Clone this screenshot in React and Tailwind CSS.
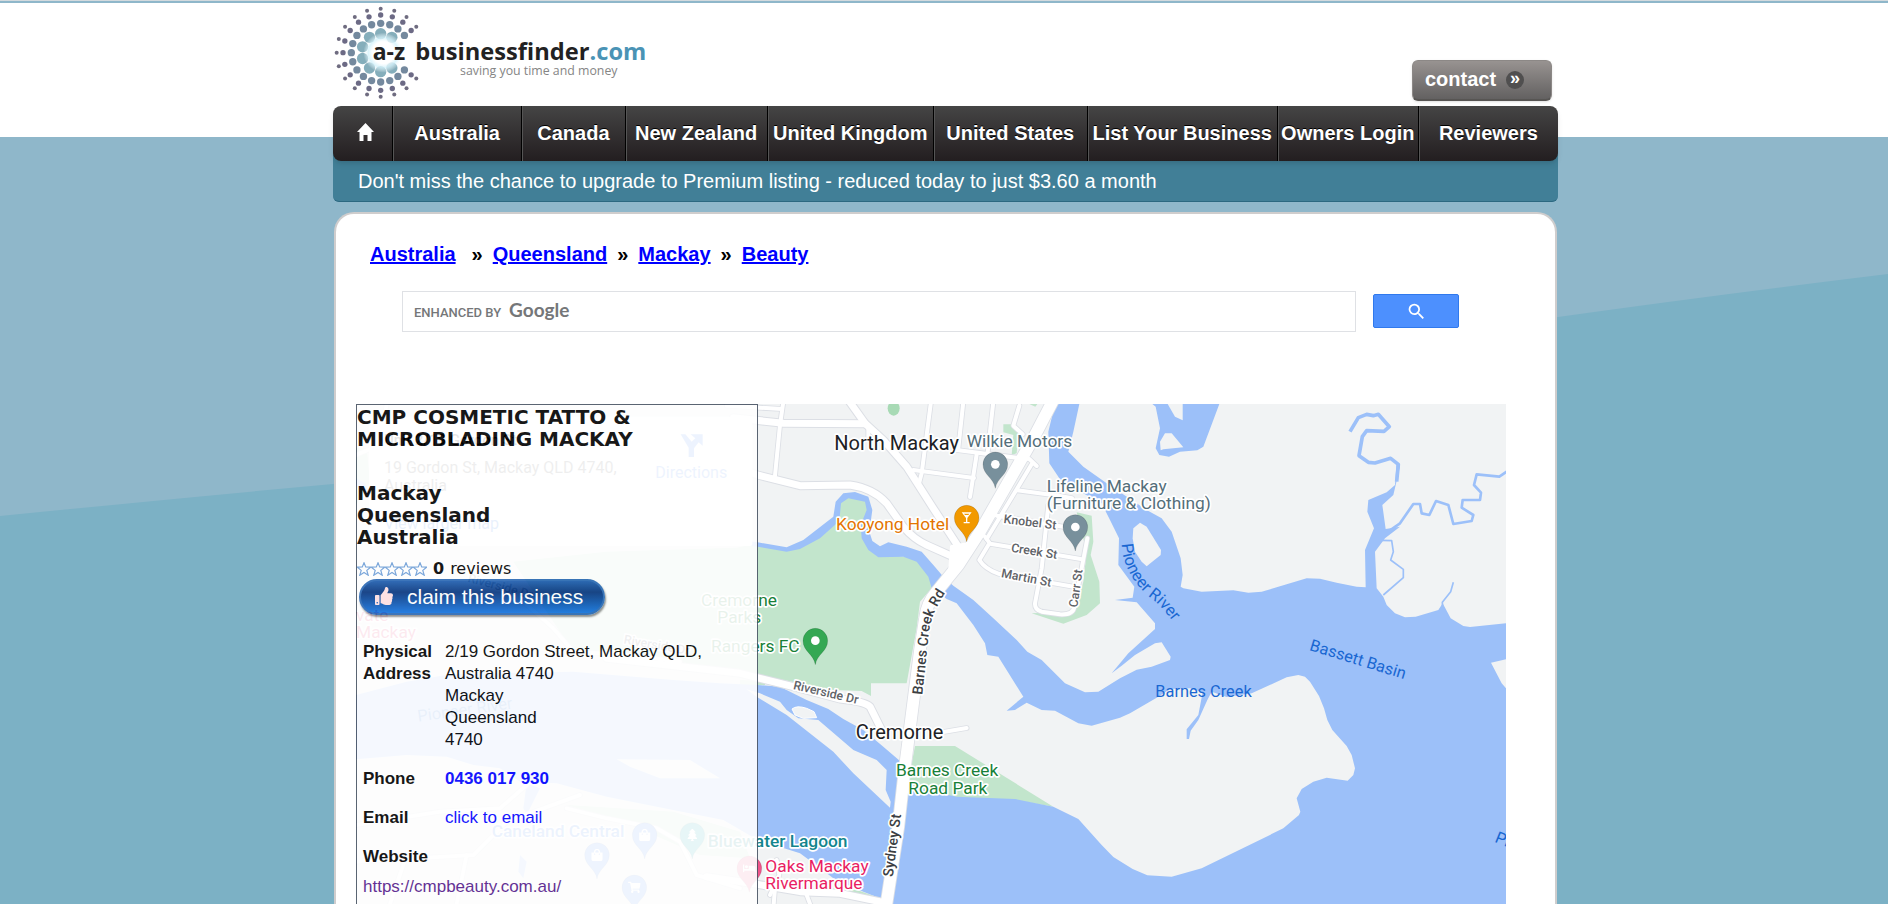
import { MdSearch } from "react-icons/md";
import { FaThumbsUp, FaBed, FaShoppingCart, FaShoppingBag, FaTree } from "react-icons/fa";

const navItems = [
  { label: "Australia", size: "flex-[129]" },
  { label: "Canada", size: "flex-[103]" },
  { label: "New Zealand", size: "flex-[142]" },
  { label: "United Kingdom", size: "flex-[166]" },
  { label: "United States", size: "flex-[154]" },
  { label: "List Your Business", size: "flex-[190]" },
  { label: "Owners Login", size: "flex-[141]" },
  { label: "Reviewers", size: "flex-[140]" },
];

const crumbs = ["Australia", "Queensland", "Mackay", "Beauty"];

// rings of the sunburst: radius, dot size, degrees between dots, colour
const rings = [
  { radius: 57, dot: 17, step: 36, fill: "#85aebb" },
  { radius: 88, dot: 11, step: 18, fill: "#74899e" },
  { radius: 113, dot: 8, step: 18, fill: "#6c6a85" },
  { radius: 132, dot: 6, step: 18, fill: "#6f6c80" },
];

function Logo() {
  const dots = [];
  rings.forEach((ring) => {
    for (let deg = 0; deg < 360; deg += ring.step) {
      if (deg > 60 && deg < 120) continue;
      const rad = (deg * Math.PI) / 180;
      dots.push(
        <circle
          key={`${ring.radius}-${deg}`}
          cx={182 + ring.radius * Math.sin(rad)}
          cy={158 - ring.radius * Math.cos(rad)}
          r={ring.dot}
          fill={ring.fill}
        />
      );
    }
  });
  return (
    <a href="#home" aria-label="a-z businessfinder.com" className="block">
      <svg viewBox="39 9 960 297" className="h-[99px] w-[320px]" fontFamily="'Open Sans', sans-serif">
        <defs>
          <radialGradient id="glow">
            <stop offset="0" stopColor="#ffffff" />
            <stop offset="0.55" stopColor="#ffffff" />
            <stop offset="0.75" stopColor="#d3f2fb" />
            <stop offset="1" stopColor="#ffffff" stopOpacity="0" />
          </radialGradient>
        </defs>
        {dots}
        <circle cx="190" cy="158" r="60" fill="url(#glow)" opacity="0.8" />
        <text x="158" y="179" fontSize="69" fontWeight="700" fill="#222222">a-z</text>
        <text x="286" y="179" fontSize="71" fontWeight="700" fill="#222222">
          businessfinder<tspan fill="#4a93b5">.com</tspan>
        </text>
        <text x="420" y="224" fontSize="37" fill="#858585">saving you time and money</text>
      </svg>
    </a>
  );
}

function Cocktail() {
  return (
    <path
      d="M-15 -16H15L2 1V13H9V17H-9V13H-2V1zM-8 -12L-5 -8H5L8 -12z"
      fill="#ffffff"
      fillRule="evenodd"
    />
  );
}

function Pin({ x, y, fill, icon: Icon, children }) {
  return (
    <g transform={`translate(${x} ${y})`}>
      <path
        d="M0 72C-5 40-37 32-37 0a37 37 0 0 1 74 0C37 32 5 40 0 72z"
        fill={fill}
        stroke="#00000030"
        strokeWidth="2"
      />
      {Icon && <Icon x="-19" y="-19" size={38} color="#ffffff" />}
      {children}
      {!Icon && !children && <circle r="13" fill="#ffffff" />}
    </g>
  );
}

const minorRoads = [
  "M-40 32L125 42",
  "M130 20L120 90L105 242",
  "M573 20L545 235L538 262",
  "M520 225L702 249",
  "M710 178L690 306",
  "M670 20L655 160",
  "M760 20L743 172",
  "M650 165L830 188L868 192L890 213",
  "M838 32L820 92L848 118",
  "M875 208L740 432",
  "M832 286L960 303L996 310",
  "M925 330L905 520L885 625Q884 645 905 650L960 658Q1000 660 1003 635L1042 430",
  "M770 362L1010 402",
  "M735 425L750 446L1022 492",
  "M745 450L718 495Q735 522 775 536L1005 576",
  "M385 90L385 125",
  "M610 1011L680 999",
  "M200 1500L215 1540M105 1480L100 1540",
  "M110 1395L118 1440L90 1500",
  "M-1152 1290L-900 1250L-720 1240L-640 1170",
  "M-1152 1400L-800 1380L-700 1280L-480 1200",
  "M-520 1240L-400 1270L-250 1300L-180 1340L-130 1440L0 1480",
  "M-1050 1527L-1000 1380M-850 1527L-820 1380",
  "M-650 620L-560 700L-500 770L-340 780L-180 800",
  "M-1152 180L-1080 150L-1060 27",
];

const majorRoads = [
  "M-20 68L130 85L375 86",
  "M325 15L375 85L430 135L500 215L580 340L655 455",
  "M-60 200L53 240L180 272L330 270Q400 280 440 325L490 395Q520 432 560 450L650 490",
  "M-400 790L0 835L160 875L300 912Q375 920 390 935L425 1005",
  "M-100 1445L53 1468L180 1490L300 1495L430 1522",
];

const mainRoad = "M940 15L880 130L800 270L720 410L655 510L590 590Q560 625 555 670L540 765L518 935L495 1115L475 1295L438 1535";

function MapView() {
  return (
    <svg
      role="img"
      aria-label="Map of Mackay"
      viewBox="-1152 27 3450 1500"
      preserveAspectRatio="xMinYMin slice"
      className="absolute inset-0 h-full w-full"
      fontFamily="Roboto, sans-serif"
    >
      <defs>
        <path id="pioneer" d="M1145 447C1148 530 1205 590 1240 615C1275 645 1300 680 1350 745" />
        <path id="barnes-rd" d="M547 900L562 760C568 680 575 655 625 580L660 530" />
        <path id="sydney-st" d="M458 1447L478 1300L491 1200" />
      </defs>
      <rect x="-1152" y="27" width="3450" height="1500" fill="#f1f3f4" />

      <g fill="#c2e5cc">
        <path d="M-680 500L-400 470L-10 458L53 445L140 460L190 440L285 375L300 315L325 300L375 310L385 345L380 440L450 480L530 490L580 560L575 580L540 620L530 700L500 865L393 865L393 903L365 888L280 885L53 840L-300 790L-500 770L-600 620z" />
        <path d="M0 855L75 858L75 870L0 870z" />
        <path d="M1010 352L1055 362L1060 440L1052 480L1078 560L1080 625L1040 660L970 686L875 655L1005 650L1030 560L1040 470z" />
        <path d="M790 88L815 88L835 115L830 175L815 180L820 120L790 112z" />
        <path d="M868 27L892 27L886 35z" />
        <path d="M525 1053L645 1053L940 1235L825 1215L650 1210L500 1180z" />
        <path d="M-1152 160L-1120 160L-1110 260L-1152 330z" />
        <path d="M-520 1230L-200 1250L0 1310L30 1390L-120 1380L-350 1280z" />
        <path d="M310 1478L360 1488L420 1510L420 1525L360 1505z" />
        <ellipse cx="461" cy="40" rx="18" ry="22" fill="#a8dab5" />
      </g>

      <g fill="#9cc0f9">
        <path
          d="M945 27L925 110L928 205L965 260L1085 325L1110 375L1137 430L1135 510L1183 575L1178 608L1125 615L1190 622L1245 685L1245 702L1165 775L1115 835L1145 812L1185 780L1245 745L1265 742L1292 785L1290 795L1235 815L1190 824L1140 850L1075 890L1035 892L975 865L905 795L862 770L830 735L760 670L700 615L640 572L610 545L580 510L545 470L500 455L445 442L420 454L397 438L388 410L397 345L385 305L345 291L310 295L287 320L280 365L190 435L140 457L53 442L-300 400L-300 415
          L53 455L140 470L180 462L240 430L298 378L303 325L325 310L375 320L380 345L362 390L365 430L385 465L415 487L490 485L530 500L565 545L575 580L620 612L650 625L700 690L735 745L742 780L775 785L850 905L800 947L825 945L860 923L905 945L945 947L1015 985L1055 992L1140 968L1170 955L1250 908L1290 882L1350 880L1388 892L1375 960L1340 1003L1340 1032L1347 1032L1352 1007L1375 975L1402 915L1415 890L1460 906L1535 895L1640 847L1675 840L1695 845L1710 860L1737 903L1752 940L1762 975L1777 1005L1820 1053L1835 1080L1845 1120L1840 1140L1823 1157L1760 1148L1720 1160L1685 1182L1670 1210L1681 1250L1677 1260L1630 1300L1385 1420L1295 1445L1222 1441L1178 1422L1120 1386L1085 1350L1015 1272L940 1235L825 1212L650 1205L520 1178
          L480 1098L430 1055L370 1005L310 972L265 942L200 915L120 875L53 870L-60 865L-200 855L-500 830L-870 838L-1000 860L-1152 900L-1152 1093L-1000 1080L-880 1085L-800 1110L-720 1120L-660 1160L-550 1165L-400 1205L-250 1235L-50 1275L53 1335L180 1375L235 1415L280 1450L370 1490L420 1510L420 1530L2300 1530L2300 1420
          L2298 880L2285 865L2253 803L2298 793L2298 685L2190 696L2170 693L2132 670L2108 625L2095 645L2027 665L1995 667L1965 655L1940 630L1930 605L1910 580L1905 470L1935 430L1980 395L1937 402L1927 330L1960 300L1980 215L1970 200L1965 270L1940 292L1885 315L1882 350L1902 400L1875 465L1877 577L1850 575L1790 563L1740 551L1700 550L1640 568L1565 590L1525 593L1480 586L1385 590L1330 580L1322 575L1328 540L1322 490L1295 410L1265 370L1220 345L1100 265L1030 215L985 170L1000 110L1018 27z"
        />
        <path d="M1237 27L1247 35L1260 100L1247 160L1258 180L1287 185L1320 170L1372 166L1390 155L1438 27z" />
        <path d="M-640 1165L-600 1180L-640 1260L-650 1240zM-660 1380L-640 1400L-650 1450L-665 1430z" />
        <path d="M-1152 250L-1125 265L-1110 300L-1152 275z" />
      </g>

      <g fill="none" stroke="#9cc0f9" strokeLinejoin="round">
        <path d="M1830 110L1855 68L1880 58L1900 62L1915 58L1948 95L1932 109L1880 107L1867 125L1857 182L1885 202L1905 204L1952 190L1975 208L1970 260" strokeWidth="11" />
        <path d="M1937 415L1980 385L2020 327L2040 327L2045 355L2068 360L2088 318L2125 330L2140 387L2195 378L2200 360L2165 338L2168 315L2220 315L2223 293L2202 270L2210 238L2278 245L2300 230" strokeWidth="8" />
        <path d="M1925 436L1955 437L1960 470L1952 495L1990 523L1990 548L1930 600" strokeWidth="5" />
        <path d="M2108 640L2107 622L2132 590L2140 562" strokeWidth="5" />
      </g>

      <g fill="#f1f3f4">
        <path d="M1283 27L1305 65L1328 76L1328 27z" />
        <path d="M1262 166L1260 140L1275 115L1295 115L1330 157L1270 163z" />
        <path d="M1178 430L1180 400L1200 383L1220 395L1263 465L1262 480L1220 514L1205 500L1185 470z" />
        <path d="M20 883L60 895L120 920L140 945L175 970L235 975L270 1005L340 1065L410 1095L440 1125L437 1185L452 1220L450 1238L340 1135L280 1070L140 960L50 905z" />
        <path d="M-370 1093L-150 1095L-60 1150L-240 1150L-330 1115z" />
      </g>
      <path d="M156 942Q170 930 200 940L222 950L230 968L190 970L165 960z" fill="#f1f3f4" stroke="#ffffff" strokeWidth="3" />

      <g fill="none" strokeLinecap="round" strokeLinejoin="round">
        <g stroke="#dcdfe5">
          {minorRoads.map((d) => <path key={d} d={d} strokeWidth="17" />)}
          {majorRoads.map((d) => <path key={d} d={d} strokeWidth="27" />)}
          <path d={mainRoad} strokeWidth="40" />
        </g>
        <g stroke="#ffffff">
          {minorRoads.map((d) => <path key={d} d={d} strokeWidth="12" />)}
          {majorRoads.map((d) => <path key={d} d={d} strokeWidth="21" />)}
          <path d={mainRoad} strokeWidth="35" />
          <path d="M635 455L690 445L650 530L630 520z" fill="#ffffff" strokeWidth="10" />
        </g>
      </g>

      <g fontSize="52" stroke="#ffffff" strokeWidth="10" strokeLinejoin="round" paintOrder="stroke">
        <g fontSize="60" fill="#202124">
          <text x="283" y="165">North Mackay</text>
          <text x="347" y="1032">Cremorne</text>
        </g>
        <g fill="#546e7a">
          <text x="680" y="155">Wilkie Motors</text>
          <text x="920" y="290">Lifeline Mackay</text>
          <text x="920" y="343">(Furniture &amp; Clothing)</text>
        </g>
        <text x="288" y="406" fill="#e37400">Kooyong Hotel</text>
        <g fill="#188038">
          <text x="-117" y="632">Cremorne</text>
          <text x="-68" y="685">Parks</text>
          <text x="-87" y="771">Rangers FC</text>
          <text x="468" y="1143">Barnes Creek</text>
          <text x="505" y="1196">Road Park</text>
        </g>
        <text x="-97" y="1357" fontWeight="500" fill="#12858d">Bluewater Lagoon</text>
        <text x="-745" y="1327" fontWeight="500" fill="#4285f4">Caneland Central</text>
        <g fill="#e91e63">
          <text x="76" y="1430">Oaks Mackay</text>
          <text x="76" y="1483">Rivermarque</text>
          <text x="-1152" y="677">vate</text>
          <text x="-1152" y="730">Mackay</text>
        </g>
        <g fontSize="37" fontWeight="500" fill="#5f6368">
          <text transform="translate(790 384) rotate(7)">Knobel St</text>
          <text transform="translate(812 470) rotate(9)">Creek St</text>
          <text transform="translate(782 546) rotate(11)">Martin St</text>
          <text transform="translate(1012 638) rotate(-82)">Carr St</text>
          <text transform="translate(158 882) rotate(13)">Riverside Dr</text>
          <text transform="translate(-350 745) rotate(10)">Riverside Dr</text>
          <text transform="translate(-818 560) rotate(15)">Riverside Dr</text>
        </g>
        <g fontSize="43" fontWeight="500" fill="#3c4043">
          <text><textPath href="#barnes-rd">Barnes Creek Rd</textPath></text>
          <text><textPath href="#sydney-st">Sydney St</textPath></text>
        </g>
      </g>

      <g fontSize="49" fill="#1967d2">
        <text><textPath href="#pioneer">Pioneer River</textPath></text>
        <text transform="translate(1706 765) rotate(17)">Bassett Basin</text>
        <text x="1246" y="906">Barnes Creek</text>
        <text transform="translate(2262 1340) rotate(22)">Pioneer River</text>
        <text transform="translate(-965 980) rotate(-8)">Pioneer River</text>
      </g>

      <Pin x={766} y={208} fill="#78909c" />
      <Pin x={1006} y={396} fill="#78909c" />
      <Pin x={680} y={368} fill="#f29900">
        <Cocktail />
      </Pin>
      <Pin x={226} y={737} fill="#34a853" />
      <Pin x={-143} y={1320} fill="#12a4af" icon={FaTree} />
      <Pin x={-286} y={1320} fill="#5491f5" icon={FaShoppingBag} />
      <Pin x={-429} y={1380} fill="#5491f5" icon={FaShoppingBag} />
      <Pin x={-317} y={1477} fill="#5491f5" icon={FaShoppingCart} />
      <Pin x={28} y={1420} fill="#f0548a" icon={FaBed} />

      {/* place box of the map */}
      <rect x="-1113" y="65" width="1150" height="388" rx="6" fill="#ffffff" />
      <g fontSize="48">
        <text x="-1068" y="150" fontWeight="500" fontSize="45" fill="#000000">Unit 2/19 Gordon St</text>
        <text x="-1068" y="234" fill="#5b5b5b">19 Gordon St, Mackay QLD 4740,</text>
        <text x="-1068" y="288" fill="#5b5b5b">Australia</text>
        <text x="-1068" y="402" fill="#1a73e8">View larger map</text>
        <text x="-254" y="249" fill="#4d8bf5">Directions</text>
      </g>
      <path d="M-178 118L-164 118L-145 140L-134 130L-148 118L-112 118L-112 152L-124 142L-138 160L-138 186L-154 186L-154 158z" fill="#4d8bf5" />
    </svg>
  );
}

function Star() {
  return (
    <svg viewBox="0 0 14 14" className="size-[14px]" fill="#ffffff" stroke="#6f9fd8" strokeWidth="1.2">
      <path d="M7 0.800L8.700 5L13.600 5.200L9.800 8.400L11.200 13.200L7 10.500L2.800 13.200L4.200 8.400L.4 5.200L5.300 5z" />
    </svg>
  );
}

function BusinessCard() {
  return (
    <div className="relative w-[402px] border border-b-0 border-gray-600 bg-white pt-px text-black opacity-90">
      <h1 className="font-['DejaVu_Sans',sans-serif] text-xl font-bold leading-[22px]">
        CMP COSMETIC TATTO &amp;
        <br />
        MICROBLADING MACKAY
      </h1>
      <h2 className="mt-8 font-['DejaVu_Sans',sans-serif] text-xl font-bold leading-[22px]">
        Mackay
        <br />
        Queensland
        <br />
        Australia
      </h2>
      <div className="mt-2.5 flex h-[21px] items-center font-['DejaVu_Sans',sans-serif] text-base">
        <span className="flex" role="img" aria-label="0 stars">
          {[1, 2, 3, 4, 5].map((n) => <Star key={n} />)}
        </span>
        <b className="ml-1.5">0</b>
        <span className="ml-1.5">reviews</span>
      </div>
      <button
        type="button"
        className="ml-0.5 flex h-9 w-[246px] items-center gap-3.5 rounded-full border-2 border-[#2a68b4] bg-linear-to-b from-[#1c5cae] via-[#06347d] via-35% to-[#1273e0] pb-0.5 pl-3.5 text-[21px] leading-none text-white shadow-[1px_2px_2px_#888888]"
      >
        <FaThumbsUp className="size-[18px] text-[#ffe0e2]" />
        claim this business
      </button>
      <table className="ml-1.5 mt-[26px] text-left text-[17px] leading-[22px]">
        <tbody className="align-top">
          <tr>
            <th scope="row" className="w-[82px] pb-[17px]">Physical Address</th>
            <td className="pb-[17px]">
              2/19 Gordon Street, Mackay QLD,
              <br />
              Australia 4740
              <br />
              Mackay
              <br />
              Queensland
              <br />
              4740
            </td>
          </tr>
          <tr>
            <th scope="row" className="pb-[17px]">Phone</th>
            <td className="pb-[17px]">
              <a href="tel:0436017930" className="font-bold text-[#0000ff]">0436 017 930</a>
            </td>
          </tr>
          <tr>
            <th scope="row" className="pb-[17px]">Email</th>
            <td className="pb-[17px]">
              <a href="#email" className="text-[#0000ff]">click to email</a>
            </td>
          </tr>
          <tr>
            <th scope="row" colSpan={2}>Website</th>
          </tr>
          <tr>
            <td colSpan={2} className="pt-2">
              <a href="https://cmpbeauty.com.au/" className="text-[#551a8b]">https://cmpbeauty.com.au/</a>
            </td>
          </tr>
        </tbody>
      </table>
    </div>
  );
}

export default function App() {
  return (
    <div className="relative flex min-h-screen flex-col bg-[#7cb1c5] font-['Liberation_Sans',Arial,sans-serif] text-black">
      <svg
        viewBox="0 0 1888 904"
        preserveAspectRatio="none"
        className="absolute inset-0 h-full w-full"
        aria-hidden="true"
      >
        <path d="M0 0H1888V274Q1700 297 1558 317L333 484Q180 498 0 516z" fill="#8fb7ca" />
        <path d="M0 3H1888V137H0z" fill="#ffffff" />
        <path d="M0 0H1888V1H0z" fill="#d3dade" />
      </svg>

      <div className="relative flex flex-1 flex-col pl-[3px]">
        <div className="mx-auto flex w-full max-w-[1225px] flex-1 flex-col">
          <header>
            <div className="flex items-start justify-between pr-1.5 pt-[3px]">
              <Logo />
              <button
                type="button"
                className="mt-[57px] flex h-[41px] w-[140px] items-start gap-2.5 rounded-md border border-b-2 border-[#8c8886] border-b-[#575553] bg-linear-to-b from-[#989391] to-[#636161] pl-3 pt-1.5 text-xl font-bold leading-6 text-white shadow"
              >
                contact
                <span className="mt-1 flex size-[18px] items-center justify-center rounded-full bg-[#504f4f] pb-1 text-lg leading-none">
                  »
                </span>
              </button>
            </div>
            <nav className="relative mt-1 flex h-[55px] divide-x divide-black overflow-hidden rounded-lg bg-linear-to-b from-[#454545] to-[#231e20] text-xl font-bold text-white shadow-md [text-shadow:0_-1px_0_#000000]">
              <a href="#home" aria-label="Home" className="flex w-[60px] items-center justify-center pb-1 pl-1.5">
                <svg viewBox="0 0 17 18" className="h-[18px] w-[17px]" fill="#ffffff">
                  <path d="M8.500 0L17 9H14.500V18H10.500V12H6.500V18H2.500V9H0z" />
                </svg>
              </a>
              {navItems.map((item) => (
                <a
                  key={item.label}
                  href="#"
                  className={`flex items-center justify-center whitespace-nowrap pb-0.5 shadow-[inset_1px_0_0_#555555] ${item.size}`}
                >
                  {item.label}
                </a>
              ))}
            </nav>
            <p className="-mt-2 rounded-b-md border-b border-[#2b6880] bg-[#417f97] pb-2 pl-[25px] pt-4 text-xl leading-6 text-white">
              Don't miss the chance to upgrade to Premium listing - reduced today to just $3.60 a month
            </p>
          </header>

          <main className="ml-px mr-px mt-2.5 flex flex-1 flex-col rounded-t-[20px] border-2 border-b-0 border-[#cfcdcd] bg-white pl-5 pr-[49px]">
            <nav className="ml-3.5 mt-7 flex gap-2.5 text-xl font-bold leading-6">
              {crumbs.map((crumb, i) => (
                <span key={crumb} className="flex gap-2.5">
                  {i > 0 && <span className={i === 1 ? "ml-1.5" : ""}>»</span>}
                  <a href="#" className="text-[#0000ff] underline">{crumb}</a>
                </span>
              ))}
            </nav>
            <form className="ml-[46px] mr-[47px] mt-[25px] flex items-start gap-[17px]">
              <label className="relative flex-1">
                <input
                  type="text"
                  aria-label="search"
                  className="block h-[41px] w-full border border-[#dfe1e5] bg-white px-3 text-base outline-none"
                />
                <span className="pointer-events-none absolute inset-y-0 left-3 flex items-baseline gap-2 pt-[7px] font-[Roboto,sans-serif] font-medium text-[#757779]">
                  <span className="text-[13px] leading-6">ENHANCED BY</span>
                  <span className="font-[Lato,sans-serif] text-[19px] font-bold leading-6">Google</span>
                </span>
              </label>
              <button
                type="button"
                aria-label="Search"
                className="mt-[3px] flex h-[34px] w-[86px] items-center justify-center rounded-xs border border-[#3079ed] bg-[#4d90fe]"
              >
                <MdSearch className="size-[21px] text-white" />
              </button>
            </form>
            <section className="relative mt-[72px] flex flex-1">
              <MapView />
              <BusinessCard />
            </section>
          </main>
        </div>
      </div>
    </div>
  );
}
